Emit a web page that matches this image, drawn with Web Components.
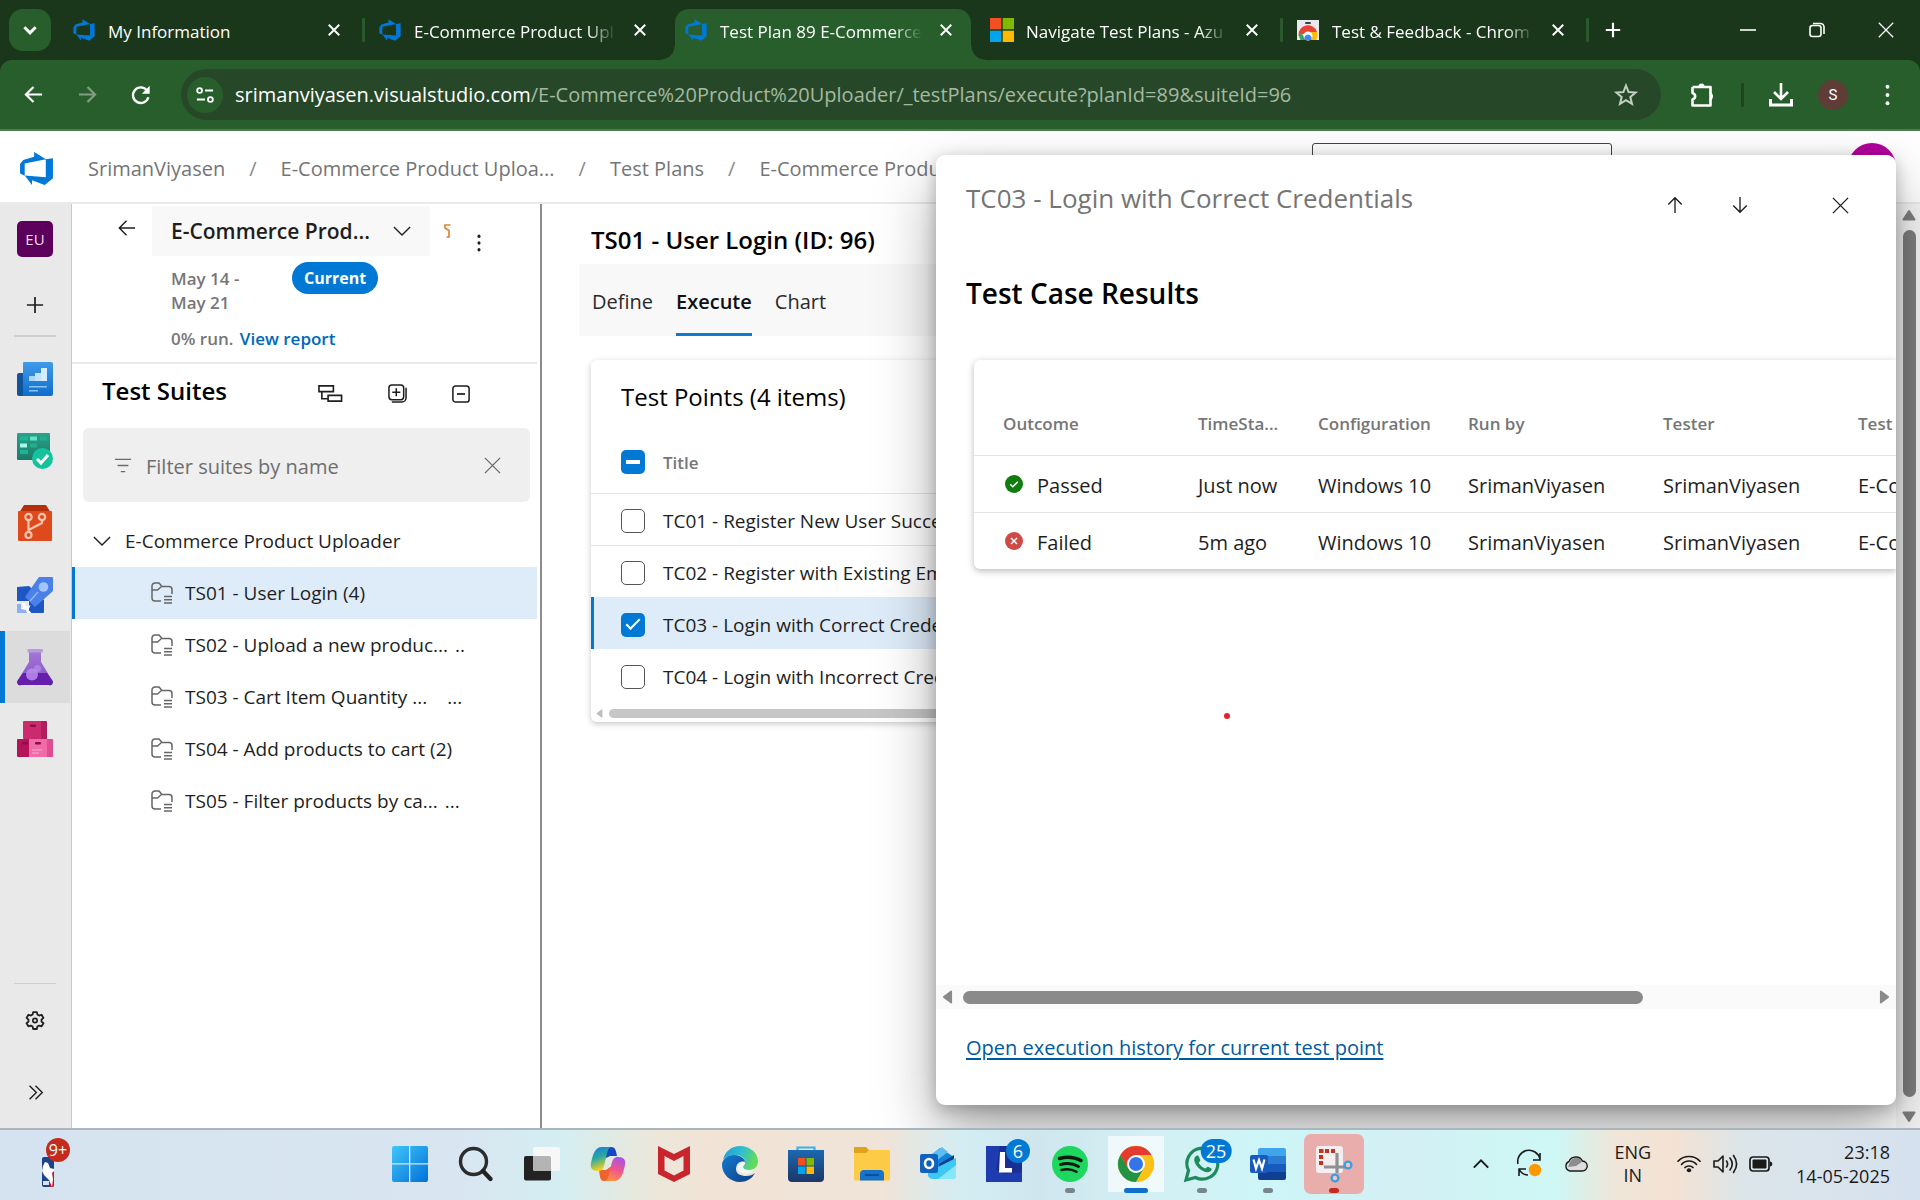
<!DOCTYPE html>
<html lang="en">
<head>
<meta charset="utf-8">
<title>Test Plan 89 E-Commerce</title>
<style>
  html, body { margin: 0; height: 100%; }
  body { font-family: "Open Sans", "Noto Sans", sans-serif; font-size: 19px; color: #1e1e1e; overflow: hidden; }
</style>
</head>
<body>
<desktop-shell></desktop-shell>
<script>
const BASE = `
  *, *::before, *::after { box-sizing: border-box; }
  button { font: inherit; color: inherit; background: none; border: 0; padding: 0; margin: 0; cursor: pointer; }
  a { color: inherit; text-decoration: none; }
  h1, h2, h3, p, ul, ol { margin: 0; padding: 0; font: inherit; list-style: none; }
  .center { display: flex; align-items: center; justify-content: center; }
`;
function define(name, css, html) {
  customElements.define(name, class extends HTMLElement {
    constructor() {
      super();
      this.attachShadow({ mode: 'open' });
      const t = document.createElement('template');
      const markup = typeof html === 'function' ? html(this) : html;
      t.innerHTML = `<style>${BASE}${css}</style>${markup}`;
      this.shadowRoot.append(t.content.cloneNode(true));
    }
  });
}

const stroke = (w, d, c = 'currentColor') => `<path d="${d}" fill="none" stroke="${c}" stroke-width="${w}"/>`;
const ICONS = {
  devops: ['0 0 18 18', `<path fill="#0078d7" d="M17 4v9.74l-4 3.28-6.2-2.26V17l-3.51-4.59 10.23.8V4.44zm-3.41.49L7.85 1v2.29L2.58 4.84 1 6.87v4.61l2.26 1V6.57z"/>`],
  microsoft: ['0 0 24 24', `<path fill="#f25022" d="M0 0h11.3v11.3H0z"/><path fill="#7fba00" d="M12.7 0H24v11.3H12.7z"/><path fill="#00a4ef" d="M0 12.7h11.3V24H0z"/><path fill="#ffb900" d="M12.7 12.7H24V24H12.7z"/>`],
  webstore: ['0 0 24 24', `<path fill="#e8eaed" d="M1 2h22v20H1z"/><rect x="9" y="4" width="6" height="2" rx="1" fill="#3c4043"/><path fill="#ea4335" d="M2.500 18a9.500 9.500 0 0 1 18.500-4h-9z"/><path fill="#34a853" d="M3 14.500a9.500 9.500 0 0 0 1.500 7.500H12l-4-4z"/><path fill="#fbbc04" d="M12 14h9a9 9 0 0 1-1 8h-9z"/><circle cx="12" cy="18" r="4.500" fill="#fff"/><path fill="#4285f4" d="M9 22a3.500 3.500 0 1 1 6 0z"/>`],
  x: ['0 0 16 16', stroke(2.2, 'M2 2l12 12M14 2L2 14')],
  xthin: ['0 0 20 20', stroke(1.4, 'M2 2l16 16M18 2L2 18')],
  plus: ['0 0 20 20', stroke(2.4, 'M10 2v16M2 10h16')],
  plusthin: ['0 0 20 20', stroke(1.9, 'M10 1v18M1 10h18')],
  chevBold: ['0 0 16 16', stroke(2.6, 'M3 5.500l5 5 5-5')],
  chev: ['0 0 20 20', stroke(1.5, 'M1 5.500l9 9 9-9')],
  up: ['0 0 20 20', stroke(2.2, 'M2 14l8-8 8 8')],
  minimise: ['0 0 16 16', stroke(1.6, 'M0 8h16')],
  restore: ['0 0 16 16', `<rect x="1" y="3.500" width="11" height="11" rx="2.500" fill="none" stroke="currentColor" stroke-width="1.600"/>${stroke(1.6, 'M4 1.500h7.500a3.500 3.500 0 0 1 3.500 3.500V12')}`],
  back: ['0 0 20 20', stroke(2.3, 'M19 10H3M10 2l-8 8 8 8')],
  backthin: ['0 0 20 20', stroke(1.6, 'M19 10H2M9.500 2L1.500 10l8 8')],
  forward: ['0 0 20 20', stroke(2.3, 'M1 10h16M10 2l8 8-8 8')],
  reload: ['0 0 24 24', stroke(2.6, 'M20 14.500A8.500 8.500 0 1 1 18.500 7') + `<path fill="currentColor" d="M21.500 2v8.500H13z"/>`],
  tune: ['0 0 20 20', `<circle cx="4" cy="5" r="2.700" fill="none" stroke="currentColor" stroke-width="2"/><circle cx="16" cy="15" r="2.700" fill="none" stroke="currentColor" stroke-width="2"/>${stroke(2, 'M10 5h9M1 15h9')}`],
  star: ['0 0 24 24', stroke(2, 'M12 2.500l2.600 6.500 7 .5-5.300 4.500 1.700 6.800-6-3.700-6 3.700 1.700-6.800L2.400 9.500l7-.5z')],
  puzzle: ['0 0 26 26', `<path fill="none" stroke="currentColor" stroke-width="2.600" stroke-linejoin="round" d="M2.500 5h18v6.500M20.500 17v6.500h-18v-6c3.500-1 3.500-5.500 0-6.500V5"/><path fill="currentColor" d="M8.500 4.500a3 3 0 0 1 6 0zM20.500 10.500a4 4 0 0 1 0 7.500z"/><path d="M20.500 10v8" stroke="currentColor" stroke-width="2.600"/>`],
  download: ['0 0 24 24', stroke(2.6, 'M12 0v14M5 9l7 7 7-7') + stroke(3, 'M1.500 16v6h21v-6')],
  dots: ['0 0 6 24', `<g fill="currentColor"><circle cx="3" cy="3" r="2.300"/><circle cx="3" cy="12" r="2.300"/><circle cx="3" cy="21" r="2.300"/></g>`],
  fav: ['0 0 7 14', stroke(1.7, 'M6.500 1H1v3l4 2.500V13H2.500')],
  overview: ['0 0 36 36', `<defs><linearGradient id="g" x2="0" y2="1"><stop stop-color="#3f9bea"/><stop offset="1" stop-color="#0f6ecb"/></linearGradient></defs><path fill="#12549c" d="M0 14a2 2 0 0 1 2-2h6v23H2a2 2 0 0 1-2-2z"/><path fill="url(#g)" d="M6 2a1 1 0 0 1 1-1h27a2 2 0 0 1 2 2v30a2 2 0 0 1-2 2H6z"/><path fill="#a9d6fb" d="M12 15h6v5h-6z"/><path fill="#c3e3fd" d="M18 12h6v8h-6z"/><path fill="#d7edff" d="M24 7h6v13h-6z"/><path fill="#8cc4f5" d="M12 25h18v1.600H12zM12 29h9v1.500h-9z"/>`],
  boards: ['0 0 36 36', `<defs><linearGradient id="g" x2="0" y2="1"><stop stop-color="#2aa38b"/><stop offset="1" stop-color="#197a68"/></linearGradient></defs><rect width="33" height="27" rx="1" fill="url(#g)"/><path fill="#1fb494" d="M3 3.500h8v4H3zM3 17h8v4H3z"/><path fill="#5ee6c4" d="M13 3.500h7v4h-7z"/><path fill="#25ab8e" d="M23 3.500h7v4h-7zM13 10.500h7v4h-7z"/><path fill="#a5fbe4" d="M3 10.500h7v4H3z"/><circle cx="25.500" cy="25.500" r="10.500" fill="#13c39c"/>${stroke(3, 'M20 26l4 4 7-8', '#fff')}`],
  repos: ['0 0 36 36', `<path fill="#b52f0b" d="M7 0h22l5 8H2z"/><rect x="1" y="6" width="34" height="30" rx="1" fill="#df4a1d"/><g fill="none" stroke="#fbc4ae" stroke-width="2.200"><circle cx="11.500" cy="12" r="3.200"/><circle cx="25" cy="12" r="3.200"/><circle cx="11.500" cy="30" r="3"/><path d="M11.500 15.500V27M25 15.500v2.500l-13.500 7"/></g>`],
  pipelines: ['0 0 36 36', `<path fill="#1e56c4" d="M0 10l12-1L27 23v12a1 1 0 0 1-1 1H12V24H0z"/><path fill="#4a80e8" d="M22 0h13a1 1 0 0 1 1 1v13L18 30 8 20z"/>${stroke(1.600, 'M13 24l8-9', '#8db4f8')}<circle cx="26.500" cy="10" r="4.800" fill="#a4c5fb"/><path fill="#8fb0ef" d="M0 27h4v5h6v4H0z"/><path fill="#fff" d="M4 26h4l1.500 4 4-2-2 5 3 3H10l-1-3-5-1 2-2z"/>`],
  plans: ['0 0 36 36', `<defs><linearGradient id="g" x2="0" y2="1"><stop stop-color="#a577d6"/><stop offset="1" stop-color="#8151c4"/></linearGradient></defs><path fill="url(#g)" d="M12 2h12v11l11 18a3 3 0 0 1-3 5H4a3 3 0 0 1-3-5l11-18z"/><path fill="#6420ab" d="M6 24h24l5 7a3 3 0 0 1-3 5H4a3 3 0 0 1-3-5z"/><rect x="10.500" width="15.500" height="3.500" rx="1" fill="#b79be0"/><circle cx="15" cy="25.500" r="6" fill="#b98df0" opacity=".85"/><circle cx="20.500" cy="19.500" r="3.600" fill="#b98df0" opacity=".7"/>`],
  artifacts: ['0 0 36 36', `<rect x="6" width="24" height="18" rx="1" fill="#cc2a6e"/><path fill="#b01f5d" d="M24 0h5a1 1 0 0 1 1 1v17h-6z"/><path fill="#b5135a" d="M0 19a1 1 0 0 1 1-1h11v18H1a1 1 0 0 1-1-1z"/><path fill="#f16ba8" d="M12 18h23a1 1 0 0 1 1 1v16a1 1 0 0 1-1 1H12z"/><path fill="#e04c90" d="M30 18h5a1 1 0 0 1 1 1v16a1 1 0 0 1-1 1h-5z"/><g fill="#8a0f45"><rect x="13" y="3.500" width="6" height="2.500" rx="1"/><rect x="5" y="21" width="6" height="2.500" rx="1"/><rect x="18" y="21" width="6" height="2.500" rx="1"/></g>${stroke(1, 'M15 29h10M15 32h7', '#f9a9ce')}`],
  gear: ['0 0 24 24', `<path fill="none" stroke="currentColor" stroke-width="2.200" stroke-linejoin="round" d="M9.800 2.500h4.400l.7 3 2 1.200 3-1 2.200 3.800-2.300 2v2.300l2.300 2-2.200 3.800-3-.9-2 1.200-.7 2.900H9.800l-.7-2.900-2-1.200-3 .9-2.200-3.800 2.300-2v-2.300l-2.300-2 2.200-3.800 3 1 2-1.200z"/><circle cx="12" cy="12.600" r="2.600" fill="none" stroke="currentColor" stroke-width="2"/>`],
  dblchev: ['0 0 20 20', stroke(1.6, 'M3 2l8 8-8 8M10 2l8 8-8 8')],
  tree: ['0 0 26 20', stroke(1.7, 'M1 2h15v6H1zM10.500 12h14v6h-14zM4 8v7.500h6.500')],
  expandAll: ['0 0 20 20', `<rect x="1" y="1" width="15.500" height="15.500" rx="3" fill="none" stroke="currentColor" stroke-width="1.600"/>${stroke(1.6, 'M8.700 4.500v8.500M4.500 8.700h8.500M4 19h10.500a4.500 4.500 0 0 0 4.500-4.500V4')}`],
  collapse: ['0 0 20 20', `<rect x="1" y="1" width="18" height="18" rx="3" fill="none" stroke="currentColor" stroke-width="1.700"/>${stroke(1.9, 'M5.500 10h9')}`],
  filter: ['0 0 20 16', stroke(1.4, 'M1 1.500h18M4 8h12M7.500 14.500h5')],
  folder: ['0 0 22 22', `<g fill="none" stroke="#666" stroke-width="1.500"><path d="M10 19H4a3 3 0 0 1-3-3V4a3 3 0 0 1 3-3h4l3 3.500h7A3 3 0 0 1 21 7.500V12"/><path d="M1 8h5.500L10.500 4.500M13 14.500h8M13 17.800h8M13 21h8"/></g>`],
  arrowUp: ['0 0 20 20', stroke(1.5, 'M10 19V2M2.500 9.500L10 2l7.500 7.500')],
  arrowDown: ['0 0 20 20', stroke(1.5, 'M10 1v17M2.500 10.500L10 18l7.500-7.500')],
  passed: ['0 0 18 18', `<circle cx="9" cy="9" r="9" fill="#107c10"/>${stroke(1.500, 'M5.200 9.200l2.600 2.600 5-5', '#fff')}`],
  failed: ['0 0 18 18', `<circle cx="9" cy="9" r="9" fill="#cd4a45"/>${stroke(1.500, 'M6 6l6 6M12 6l-6 6', '#fff')}`],
  nba: ['0 0 12 30', `<rect width="12" height="30" rx="2" fill="#1d428a"/><path fill="#c8102e" d="M8 14h4v14a2 2 0 0 1-2 2H8z"/><path fill="#fff" d="M3 5l3 1 2 5 4 1v2l-2 2 1 6-1 8L7 23 2 18l-2-4 1-5z"/><path fill="#dbe3f2" d="M1 24h6v4H1z"/>`],
  windows: ['0 0 36 36', `<defs><linearGradient id="g" x2="1" y2="1"><stop stop-color="#3fc6fa"/><stop offset="1" stop-color="#0270d8"/></linearGradient></defs><path fill="url(#g)" d="M2 0h15v17.300H0V2a2 2 0 0 1 2-2zM18.300 0H34a2 2 0 0 1 2 2v15.300H18.300zM0 18.600h17V36H2a2 2 0 0 1-2-2zM18.300 18.600H36V34a2 2 0 0 1-2 2H18.300z"/>`],
  search: ['0 0 36 36', `<circle cx="15.500" cy="15.500" r="13" fill="none" stroke="#2a2c2e" stroke-width="3.400"/><path d="M25 25l7.500 8" stroke="#222" stroke-width="4.400" stroke-linecap="round"/>`],
  taskview: ['0 0 36 36', `<rect y="10" width="27" height="24.500" rx="2" fill="#232323"/><rect x="9" y="1" width="27" height="24" rx="2" fill="#f7f7f7"/><path fill="#b4b4b4" d="M9 10h16a2 2 0 0 1 2 2v13H11a2 2 0 0 1-2-2z"/>`],
  copilot: ['0 0 36 36', `<defs><linearGradient id="a" x2=".3" y2="1"><stop stop-color="#1d75e2"/><stop offset=".5" stop-color="#29a9a0"/><stop offset="1" stop-color="#f8cf1c"/></linearGradient><linearGradient id="b" x1=".6" x2=".3" y2="1"><stop stop-color="#a755e8"/><stop offset=".5" stop-color="#f0548e"/><stop offset="1" stop-color="#fb9346"/></linearGradient></defs><path fill="#1647c4" d="M14 1h7c4 0 5 3 6 9h-7l-8 4z"/><path fill="#f0622e" d="M9 24h7l7-5-4 13c-1 2.500-2 3-5 3-3.500 0-4-3-5-11z"/><path fill="url(#a)" d="M12 1h9c-3 1-3.500 4-6 15-1.500 7-3 9-7 9-6 0-8-3-7-8C3 8 5 1 12 1z"/><path fill="url(#b)" d="M24 35h-9c3-1 3.500-4 6-15 1.500-7 3-9 7-9 6 0 8 3 7 8-2 9-4 16-11 16z"/>`],
  mcafee: ['0 0 36 36', `<path fill="#c8252c" d="M2 0l16 8 16-8v28l-16 8-16-8z"/><path fill="#efe4da" d="M8.500 10l9.500 5 9.500-5v14.500L18 29.500l-9.500-5z"/>`],
  edge: ['0 0 36 36', `<defs><linearGradient id="a" x2="1" y2=".3"><stop stop-color="#1a9be0"/><stop offset=".6" stop-color="#35c1c8"/><stop offset="1" stop-color="#5fdc5a"/></linearGradient><linearGradient id="b" x2="1" y2="1"><stop stop-color="#1579cf"/><stop offset="1" stop-color="#0c3f85"/></linearGradient></defs><path fill="url(#a)" d="M1 14C3 5 10 0 18 0c10 0 18 7 18 15 0 6-4 9-9 9-4 0-6-1-6-3 0-1 2-2 2-5 0-4-4-7-10-7C7 9 2 12 1 14z"/><path fill="url(#b)" d="M0 19C0 13 6 9 12 9c7 0 11 4 11 7-4-2-9 1-9 7 0 5 5 7 10 7 4 0 7-1 9-3-3 6-9 9-15 9C8 36 0 28 0 19z"/><path fill="#eef6f8" d="M23 16c0 3-2 4-2 5 0 2 2 3 6 3 2 0 4-.5 5-1-1 3-5 5-9 5-5 0-8-4-7-8s5-5 7-4z"/>`],
  store: ['0 0 36 36', `<defs><linearGradient id="g" x2="0" y2="1"><stop stop-color="#1c68b0"/><stop offset="1" stop-color="#1b3766"/></linearGradient></defs>${stroke(2.2, 'M9.500 6V1.500h17V6', '#37b0ec')}<path fill="url(#g)" d="M0 4h36v28a4 4 0 0 1-4 4H4a4 4 0 0 1-4-4z"/><path fill="#f25022" d="M10 12h7.500v7.500H10z"/><path fill="#7fba00" d="M18.500 12H26v7.500h-7.500z"/><path fill="#00a4ef" d="M10 20.500h7.500V28H10z"/><path fill="#ffb900" d="M18.500 20.500H26V28h-7.500z"/>`],
  explorer: ['0 0 36 36', `<path fill="#e0a31a" d="M0 1h12l3 3-3 4H0z"/><path fill="#fdcb45" d="M0 7h12l3-3h21v29a1.500 1.500 0 0 1-1.500 1.500h-33A1.500 1.500 0 0 1 0 33z"/><path fill="#1573cf" d="M6 28a4 4 0 0 1 4-4h16a4 4 0 0 1 4 4v6.500H6z"/>${stroke(1.800, 'M11 29h14', '#0b4b96')}`],
  outlook: ['0 0 36 36', `<path fill="#1484d8" d="M7 12L20 2l14 9v7L20 28 7 24z"/><path fill="#5bc0f0" d="M12 8L22 1l6 5-16 12z"/><path fill="#0f3f91" d="M19 18l15-9v6L20 26z"/><path fill="#3cc8f0" d="M8 26l28-14v17a4 4 0 0 1-4 4H12a5 5 0 0 1-4-3z"/><path fill="#86e7f8" d="M18 33l18-14v10a4 4 0 0 1-4 4z"/><rect y="8" width="18" height="19" rx="2" fill="#0f63be"/><ellipse cx="9" cy="17.500" rx="4" ry="4.500" fill="none" stroke="#fff" stroke-width="2.600"/>`],
  lapp: ['0 0 36 36', `<path fill="#1f3bb0" d="M0 0h36v36H0z"/><path fill="#142a80" d="M14 0L10 24l8 4 18-2V0z" opacity=".6"/><path fill="#fff" d="M14 6h5v16h7v4.500H13z"/>`],
  spotify: ['0 0 36 36', `<circle cx="18" cy="18" r="18" fill="#1ed760"/><g fill="none" stroke="#0c1a10" stroke-linecap="round"><path stroke-width="3.600" d="M7.500 12.500c7-2 15.500-1.300 21.500 2"/><path stroke-width="3" d="M8.500 18.500c6-1.700 13-1 18 2"/><path stroke-width="2.400" d="M9.500 24c5-1.300 10.500-.8 15 1.800"/></g>`],
  chrome: ['0 0 36 36', `<circle cx="18" cy="18" r="18" fill="#fbc116"/><path fill="#e33b2e" d="M2.400 9A18 18 0 0 1 33.600 9H18l-8 13.500z"/><path fill="#229342" d="M2.400 9A18 18 0 0 0 18 36l7.800-13.500H10.200z"/><path fill="#fbc116" d="M33.600 9A18 18 0 0 1 18 36l7.800-13.500V9z"/><circle cx="18" cy="18" r="9" fill="#fff"/><circle cx="18" cy="18" r="7" fill="#3573e8"/>`],
  whatsapp: ['0 0 36 36', `<path fill="none" stroke="#1f8a5c" stroke-width="3.200" d="M2 34l2.500-9.500A15.500 15.500 0 1 1 11.500 31.500z"/><path fill="#1f8a5c" d="M11.500 10.500c1.500-1.500 3-1 3.500.5l1.300 3c.3 1-1.800 2.500-1.500 3 1.500 2.500 3.500 4.500 6.200 5.500.8.300 2-2.200 3-1.800l3 1.500c1 .5.7 2-.5 3-2 1.700-4.500 1.300-7 .1-4.500-2.100-7-5-8.700-8.800-1-2.300-.8-4.600.7-6z"/>`],
  word: ['0 0 36 36', `<path fill="#41a5ee" d="M8 4a2 2 0 0 1 2-2h24a2 2 0 0 1 2 2v6H8z"/><path fill="#2b7cd3" d="M8 10h28v8H8z"/><path fill="#185abd" d="M8 18h28v8H8z"/><path fill="#103f91" d="M8 26h28v6a2 2 0 0 1-2 2H10a2 2 0 0 1-2-2z"/><rect y="9" width="18" height="18" rx="2" fill="#185abd"/>${stroke(2.200, 'M3.500 13.500l2.500 9 3-8.500 3 8.500 2.500-9', '#fff')}`],
  snip: ['0 0 36 36', `<rect width="27" height="27" rx="3" fill="#f4efee"/><g fill="#c8311d"><path d="M3 3h4.500v4H3zM9 3h4v4H9zM15 3h4v4h-4zM3 9h4v4H3zM3 15h4v4H3z"/></g><g fill="none" stroke="#8d9095" stroke-width="3.200"><path d="M21 7v20M8 21h21"/></g><g fill="#f1c8c5" stroke="#3d9fe0" stroke-width="2.400"><circle cx="32" cy="19" r="3.400"/><circle cx="19" cy="32" r="3.400"/></g>`],
  sync: ['0 0 24 24', stroke(1.6, 'M1 12A11 11 0 0 1 23 7M23 1v7h-7M2 24v-7h7M2 17c2 4 5 6 9 6') + `<circle cx="18" cy="18" r="6.200" fill="#ff9800"/>`],
  cloud: ['0 0 24 16', `<path d="M6 15a5 5 0 0 1-1-9.500A7.500 7.500 0 0 1 18.500 5 5 5 0 0 1 18 15z" fill="#dedede" stroke="#1b1b1b" stroke-width="1.400"/><path fill="#8d8d8d" d="M6 6c3-5 9-6 12 0l-6 4-8 1z"/>`],
  wifi: ['0 0 24 20', `<g fill="none" stroke="currentColor" stroke-width="1.700" stroke-linecap="round"><path d="M1 7c6-7 16-7 22 0M4.500 10.500c4-5 11-5 15 0M8 14c2-2.500 6-2.500 8 0"/></g><circle cx="12" cy="17" r="2.200" fill="currentColor"/>`],
  volume: ['0 0 24 20', `<g fill="none" stroke="currentColor" stroke-width="1.600" stroke-linejoin="round" stroke-linecap="round"><path d="M1 7h4l5-5v16l-5-5H1zM13.500 7c1.500 2 1.500 4 0 6M17 4c3 4 3 8 0 12M20.500 1.500c4 5.500 4 11.500 0 17"/></g>`],
  battery: ['0 0 24 16', `<rect x="1" y="1" width="19" height="14" rx="3" fill="none" stroke="currentColor" stroke-width="1.700"/><rect x="3.500" y="3.500" width="14" height="9" rx="1" fill="currentColor"/><path fill="currentColor" d="M21 5.500c3 0 3 5 0 5z"/>`],
  triUp: ['0 0 14 12', `<path fill="#7f7f7f" stroke="#7f7f7f" stroke-width="2" stroke-linejoin="round" d="M7 2l5.500 8.500h-11z"/>`],
  triDown: ['0 0 14 12', `<path fill="#7f7f7f" stroke="#7f7f7f" stroke-width="2" stroke-linejoin="round" d="M7 10L1.500 1.500h11z"/>`],
  triLeft: ['0 0 12 14', `<path fill="currentColor" stroke="currentColor" stroke-width="2" stroke-linejoin="round" d="M2 7l8-5.500v11z"/>`],
  triRight: ['0 0 12 14', `<path fill="currentColor" stroke="currentColor" stroke-width="2" stroke-linejoin="round" d="M10 7L2 1.500v11z"/>`]
};
customElements.define('ui-icon', class extends HTMLElement {
  connectedCallback() {
    if (this.shadowRoot) return;
    const [box, body] = ICONS[this.getAttribute('name')];
    const w = this.getAttribute('w'), h = this.getAttribute('h') || w;
    this.attachShadow({ mode: 'open' }).innerHTML =
      `<style>:host{display:block;flex:none;width:${w}px;height:${h}px}svg{display:block;width:100%;height:100%;overflow:visible}</style>
       <svg viewBox="${box}" preserveAspectRatio="none" aria-hidden="true">${body}</svg>`;
  }
});

/* ---------- browser chrome ---------- */
define('browser-tab', `
  :host { display: block; flex: 0 1 306px; min-width: 0; }
  .tab { height: 51px; display: flex; align-items: center; gap: 12px; position: relative; margin-top: 9px; padding: 0 22px 9px 14px; color: #fff; font-size: 17px; line-height: 24px; }
  .tab::after { content: ""; position: absolute; right: -1px; top: 9px; width: 3px; height: 24px; border-radius: 1px; background: #29592c; }
  :host([quiet]) .tab::after { display: none; }
  :host([active]) .tab { background: #285e2c; border-radius: 14px 14px 0 0; margin-left: 5px; margin-right: 5px; padding: 0 17px 9px 9px; }
  :host([active]) .tab::after { display: none; }
  .foot { display: none; }
  :host([active]) .foot { display: block; position: absolute; bottom: 0; width: 14px; height: 14px; }
  .l { left: -14px; background: radial-gradient(circle at 0 0, transparent 13px, #285e2c 14px); }
  .r { right: -14px; background: radial-gradient(circle at 100% 0, transparent 13px, #285e2c 14px); }
  .title { flex: 1; min-width: 0; overflow: hidden; white-space: nowrap; padding-top: 3px; }
  :host([fade]) .title { -webkit-mask-image: linear-gradient(90deg, #000 86%, transparent); mask-image: linear-gradient(90deg, #000 86%, transparent); }
  button { width: 24px; height: 24px; margin-right: -4px; }
`, el => `<div class="tab"><i class="foot l"></i><i class="foot r"></i><ui-icon name="${el.getAttribute('icon')}" w="24"></ui-icon><span class="title"><slot></slot></span><button class="center" aria-label="Close tab"><ui-icon name="x" w="14"></ui-icon></button></div>`);

define('browser-chrome', `
  :host { display: block; background: #1a371b; }
  .strip { display: flex; height: 60px; padding-left: 9px; color: #fff; }
  .drop { width: 42px; height: 42px; margin: 9px 7px 0 0; border-radius: 14px; background: #285e2c; }
  .strip > button:not(.drop) { height: 60px; }
  .new { width: 50px; }
  .win { margin-left: auto; display: flex; }
  .win button { width: 69px; height: 60px; }
  .bar { display: flex; align-items: center; height: 71px; background: #285e2c; border-radius: 12px 12px 0 0; border-bottom: 2px solid #4e7a50; padding: 0 6px; color: #fff; }
  .nav { width: 54px; height: 54px; }
  .off { color: #7f9f80; }
  .omni { flex: 1; display: flex; align-items: center; height: 51px; margin-left: 13px; padding: 0 23px 0 6px; border-radius: 26px; background: #274828; min-width: 0; }
  .chip { width: 36px; height: 36px; border-radius: 50%; background: #285e2c; margin-right: 12px; }
  .url { flex: 1; font-size: 20px; line-height: 28px; color: #a4b8a2; white-space: nowrap; overflow: hidden; }
  .url b { font-weight: 400; color: #fff; }
  .star { color: #c3cfc1; }
  .tools { display: flex; align-items: center; gap: 25px; padding: 0 24px 0 29px; }
  .rule { width: 3px; height: 24px; background: #1c4520; border-radius: 1px; }
  .me { width: 30px; height: 30px; border-radius: 50%; background: #5f3d37; font: 15px Roboto, sans-serif; margin-right: 12px; }
`, `
  <div class="strip">
    <button class="drop center" aria-label="Search tabs"><ui-icon name="chevBold" w="18"></ui-icon></button>
    <browser-tab icon="devops">My Information</browser-tab>
    <browser-tab icon="devops" fade quiet>E-Commerce Product Upl</browser-tab>
    <browser-tab icon="devops" fade active>Test Plan 89 E-Commerce</browser-tab>
    <browser-tab icon="microsoft" fade>Navigate Test Plans - Azu</browser-tab>
    <browser-tab icon="webstore" fade>Test &amp; Feedback - Chrom</browser-tab>
    <button class="new center" aria-label="New tab"><ui-icon name="plus" w="18"></ui-icon></button>
    <div class="win">
      <button class="center" aria-label="Minimise"><ui-icon name="minimise" w="16"></ui-icon></button>
      <button class="center" aria-label="Restore"><ui-icon name="restore" w="16"></ui-icon></button>
      <button class="center" aria-label="Close"><ui-icon name="xthin" w="18"></ui-icon></button>
    </div>
  </div>
  <div class="bar">
    <button class="nav center" aria-label="Back"><ui-icon name="back" w="19"></ui-icon></button>
    <button class="nav center off" aria-label="Forward"><ui-icon name="forward" w="19"></ui-icon></button>
    <button class="nav center" aria-label="Reload"><ui-icon name="reload" w="22"></ui-icon></button>
    <div class="omni">
      <button class="chip center" aria-label="Site information"><ui-icon name="tune" w="18"></ui-icon></button>
      <span class="url"><b>srimanviyasen.visualstudio.com</b>/E-Commerce%20Product%20Uploader/_testPlans/execute?planId=89&amp;suiteId=96</span>
      <button class="star" aria-label="Bookmark"><ui-icon name="star" w="24"></ui-icon></button>
    </div>
    <div class="tools">
      <button aria-label="Extensions"><ui-icon name="puzzle" w="26"></ui-icon></button>
      <i class="rule"></i>
      <button aria-label="Downloads"><ui-icon name="download" w="24"></ui-icon></button>
      <button class="me center">S</button>
      <button aria-label="Menu"><ui-icon name="dots" w="5" h="22"></ui-icon></button>
    </div>
  </div>`);

/* ---------- Azure DevOps ---------- */
define('az-header', `
  :host { display: flex; align-items: center; height: 73px; background: #fff; border-bottom: 2px solid #eaeaea; padding: 4px 24px 0 18px; color: #757575; font-size: 20px; line-height: 28px; }
  nav ol { display: flex; margin-left: 33px; white-space: nowrap; }
  li + li::before { content: "/"; padding: 0 24px; color: #8a8a8a; }
  .find { width: 300px; height: 48px; margin: 8px 236px 0 auto; border: 1px solid #444; border-radius: 3px; background: #fff; padding: 0; align-self: flex-start; }
  .me { width: 48px; height: 48px; border-radius: 50%; background: #b4009e; align-self: flex-start; margin-top: 8px; flex: none; }
`, `
  <a href="#" aria-label="Azure DevOps"><ui-icon name="devops" w="37"></ui-icon></a>
  <nav><ol><li><a href="#">SrimanViyasen</a></li><li><a href="#">E-Commerce Product Uploa...</a></li><li><a href="#">Test Plans</a></li><li><a href="#">E-Commerce Produ</a></li></ol></nav>
  <input class="find" type="search" aria-label="Search">
  <button class="me" aria-label="Account"></button>`);

define('az-rail', `
  :host { display: flex; flex-direction: column; align-items: center; width: 72px; flex: none; background: #e9e9e9; border-right: 1px solid #c8c8c8; padding: 17px 1px 0 0; }
  .eu { width: 36px; height: 36px; border-radius: 5px; background: #5c005c; color: #f1dff1; font-size: 15px; }
  .add { width: 36px; height: 36px; margin: 30px 0 12px; }
  hr { width: 42px; border: 0; height: 2px; background: #cfcfcf; margin: 0 0 6px; }
  .hub { width: 100%; height: 72px; }
  .on { background: #dcdcdc; box-shadow: inset 5px 0 #0078d4; }
  .gap { flex: 1; }
  .thin { height: 1px; margin: 0; }
`, `
  <a class="eu center" href="#">EU</a>
  <button class="add center" aria-label="Add"><ui-icon name="plusthin" w="18"></ui-icon></button>
  <hr>
  ${['overview', 'boards', 'repos', 'pipelines', 'plans', 'artifacts'].map(n => `<a class="hub center${n === 'plans' ? ' on' : ''}" href="#" aria-label="${n}"><ui-icon name="${n}" w="36"></ui-icon></a>`).join('')}
  <div class="gap"></div>
  <hr class="thin">
  <button class="hub center" aria-label="Settings"><ui-icon name="gear" w="20"></ui-icon></button>
  <button class="hub center" aria-label="Expand"><ui-icon name="dblchev" w="17"></ui-icon></button>`);

define('suite-item', `
  :host { display: block; }
  button { display: flex; align-items: center; width: 100%; height: 52px; padding-left: 79px; font-size: 19px; line-height: 28px; text-align: left; white-space: nowrap; }
  :host([selected]) button { background: #deecf9; box-shadow: inset 3px 0 #0078d4; }
  ui-icon { margin-right: 12px; }
  .more { margin-left: var(--gap, 7px); }
`, `<button><ui-icon name="folder" w="22"></ui-icon><slot></slot><span class="more"><slot name="more"></slot></span></button>`);

define('suites-panel', `
  :host { display: block; width: 465px; flex: none; background: #fff; }
  .plan { display: flex; padding: 2px 0 11px 31px; border-bottom: 2px solid #eaeaea; }
  .back { width: 48px; height: 44px; }
  .col { width: 278px; margin-left: 1px; }
  .pick { display: flex; width: 100%; height: 50px; align-items: center; justify-content: space-between; padding: 0 19px; background: #f8f8f8; font-weight: 600; font-size: 21px; white-space: nowrap; }
  .meta { display: flex; padding: 6px 19px 0; font-size: 17px; line-height: 24px; color: #767676; font-weight: 600; }
  .date { width: 121px; padding: 5px 40px 0 0; white-space: nowrap; }
  .pill { height: 32px; padding: 4px 12px; border-radius: 16px; background: #0078d4; color: #fff; font-weight: 700; font-size: 16px; }
  .run { padding: 12px 19px 0; font-size: 17px; line-height: 24px; color: #767676; font-weight: 600; }
  .run a { color: #0068b8; margin-left: 2px; }
  .fav { height: 16px; margin: 17px 26px 0 14px; color: #d8873a; }
  .menu { margin-top: 28px; height: 18px; }
  .head { display: flex; align-items: center; height: 64px; padding: 0 67px 12px 30px; }
  h2 { flex: 1; font-size: 24px; font-weight: 600; color: #000; }
  .acts { display: flex; gap: 45px; align-items: center; padding-top: 7px; }
  .filter { display: flex; align-items: center; height: 74px; margin: 0 7px 0 11px; padding: 0 28px 0 31px; border-radius: 6px; background: #efefef; color: #6b6b6b; }
  .filter input { flex: 1; min-width: 0; margin-left: 14px; padding: 2px 0 0; border: 0; background: none; font: inherit; font-size: 20px; line-height: 28px; height: 34px; outline: 0; }
  .filter input::placeholder { color: #6e6e6e; opacity: 1; }
  .root { display: flex; align-items: center; gap: 14px; width: 100%; height: 52px; margin-top: 13px; padding-left: 21px; font-size: 19px; }
`, `
  <div class="plan">
    <button class="back center" aria-label="Back"><ui-icon name="backthin" w="18"></ui-icon></button>
    <div class="col">
      <button class="pick">E-Commerce Prod...<ui-icon name="chev" w="18"></ui-icon></button>
      <div class="meta"><span class="date">May 14 -<br>May 21</span><span class="pill">Current</span></div>
      <p class="run">0% run. <a href="#">View report</a></p>
    </div>
    <button class="fav" aria-label="Favourite"><ui-icon name="fav" w="7" h="14"></ui-icon></button>
    <button class="menu" aria-label="More"><ui-icon name="dots" w="4" h="18"></ui-icon></button>
  </div>
  <div class="head"><h2>Test Suites</h2><div class="acts">
    <button aria-label="Tree view"><ui-icon name="tree" w="25" h="19"></ui-icon></button>
    <button aria-label="Expand all"><ui-icon name="expandAll" w="19"></ui-icon></button>
    <button aria-label="Collapse all"><ui-icon name="collapse" w="18"></ui-icon></button></div></div>
  <div class="filter"><ui-icon name="filter" w="18" h="15"></ui-icon><input type="text" placeholder="Filter suites by name" aria-label="Filter suites by name"><button aria-label="Clear filter"><ui-icon name="xthin" w="19"></ui-icon></button></div>
  <button class="root"><ui-icon name="chev" w="18"></ui-icon>E-Commerce Product Uploader</button>
  <suite-item selected>TS01 - User Login (4)</suite-item>
  <suite-item>TS02 - Upload a new produc...<span slot="more">..</span></suite-item>
  <suite-item style="--gap:20px">TS03 - Cart Item Quantity ...<span slot="more">...</span></suite-item>
  <suite-item>TS04 - Add products to cart (2)</suite-item>
  <suite-item>TS05 - Filter products by ca...<span slot="more">...</span></suite-item>`);

define('points-pane', `
  :host { display: block; flex: 1; min-width: 0; background: #fff; border-left: 2px solid #8c8c8c; margin-left: 3px; padding-left: 37px; overflow: hidden; }
  h1 { padding: 21px 0 0 12px; font-size: 24px; line-height: 30px; height: 60px; font-weight: 600; color: #000; }
  .tabs { display: flex; gap: 23px; height: 72px; padding-left: 13px; background: #f8f8f8; font-size: 20px; color: #2a2a2a; }
  .tabs button { height: 72px; border-bottom: 3px solid transparent; border-top: 5px solid transparent; }
  .tabs .on { font-weight: 600; color: #111; border-bottom-color: #0f78d0; }
  .card { margin: 24px 24px 0 12px; border-radius: 6px; background: #fff; box-shadow: 0 2px 6px rgba(0,0,0,.22); height: 362px; overflow: hidden; display: flex; flex-direction: column; }
  h2 { padding: 22px 0 0 30px; font-size: 24px; line-height: 30px; height: 72px; color: #000; }
  table { width: 100%; border-collapse: collapse; font-size: 19px; table-layout: fixed; }
  th { font-weight: 600; text-align: left; color: #767676; font-size: 17px; height: 61px; padding: 0; }
  th, td { border-bottom: 1px solid #e4e4e4; white-space: nowrap; }
  td { height: 52px; padding: 3px 0 0; }
  tr.s3 td, tr.s2 td, tr.s4 td { border-bottom-color: transparent; }
  tr.s3 { background: #deecf9; box-shadow: inset 3px 0 #0078d4; }
  .c { width: 72px; padding-left: 30px; }
  label { display: block; }
  input { appearance: none; display: block; width: 24px; height: 24px; margin: 0; border: 1px solid #555; border-radius: 5px; background: #fff; }
  input.mix { border: 0; background: linear-gradient(#fff, #fff) center / 14px 4px no-repeat #0078d4; }
  input:checked { border: 0; background: #0078d4; display: grid; place-items: center; }
  input:checked::before { content: ""; width: 14px; height: 7px; border: solid #fff; border-width: 0 0 2px 2px; rotate: -45deg; margin-bottom: 5px; }
  .scroll { display: flex; align-items: center; gap: 6px; height: 17px; padding-left: 5px; margin-top: auto; color: #bdbdbd; }
  .scroll i { height: 9px; flex: 1; border-radius: 5px; background: #c6c6c6; }
`, `
  <h1>TS01 - User Login (ID: 96)</h1>
  <div class="tabs"><button>Define</button><button class="on">Execute</button><button>Chart</button></div>
  <section class="card">
    <h2>Test Points (4 items)</h2>
    <table>
      <thead><tr><th class="c"><input class="mix" type="checkbox" aria-label="Select all"></th><th>Title</th></tr></thead>
      <tbody>
        ${['TC01 - Register New User Succe', 'TC02 - Register with Existing Em', 'TC03 - Login with Correct Crede', 'TC04 - Login with Incorrect Cred'].map((t, i) =>
          `<tr class="s${i + 1}"><td class="c"><input type="checkbox" id="p${i}"${i === 2 ? ' checked' : ''}></td><td><label for="p${i}">${t}</label></td></tr>`).join('')}
      </tbody>
    </table>
    <div class="scroll"><ui-icon name="triLeft" w="7" h="9"></ui-icon><i></i></div>
  </section>`);

define('results-dialog', `
  :host { display: flex; flex-direction: column; position: absolute; top: 24px; right: 24px; bottom: 23px; width: 50%; background: #fff; border-radius: 9px; overflow: hidden; box-shadow: 0 28px 60px rgba(0,0,0,.34), 0 4px 16px rgba(0,0,0,.24); }
  header { display: flex; align-items: flex-start; padding: 27px 46px 0 30px; }
  h1 { flex: 1; font-size: 26px; line-height: 32px; color: #757575; }
  header button { margin-top: 14px; }
  .down { margin-left: 47px; margin-right: 82px; }
  h2 { padding: 60px 0 0 30px; font-size: 28px; line-height: 36px; font-weight: 600; color: #000; }
  .card { margin: 49px 0 0 38px; border-radius: 6px 0 0 6px; box-shadow: 0 2px 7px rgba(0,0,0,.28); overflow: hidden; }
  table { border-collapse: collapse; table-layout: fixed; width: 1100px; font-size: 20px; }
  th { height: 95px; padding: 33px 0 0; font-size: 17px; font-weight: 600; color: #767676; text-align: left; border-bottom: 1px solid #e4e4e4; }
  td { height: 57px; padding: 3px 0 0; border-bottom: 1px solid #e4e4e4; }
  tr:last-child td { border-bottom: 0; }
  th, td { white-space: nowrap; }
  .o { display: flex; align-items: center; gap: 14px; }
  .o ui-icon { margin: 0 0 3px 2px; }
  .dot { width: 6px; height: 6px; border-radius: 50%; background: #e0242b; position: absolute; left: 30%; top: calc(59% - 3px); }
  .scroll { display: flex; align-items: center; height: 24px; margin-top: auto; padding: 0 6px; gap: 10px; background: #fafafa; color: #8a8a8a; }
  .track { flex: 1; }
  .track i { display: block; width: 75%; height: 13px; border-radius: 7px; background: #8a8a8a; }
  footer { padding: 23px 30px 41px; font-size: 20px; line-height: 32px; }
  footer a { color: #005a9e; text-decoration: underline; text-underline-offset: 3px; }
`, `
  <header><h1>TC03 - Login with Correct Credentials</h1>
    <button aria-label="Previous"><ui-icon name="arrowUp" w="18"></ui-icon></button>
    <button class="down" aria-label="Next"><ui-icon name="arrowDown" w="18"></ui-icon></button>
    <button aria-label="Close"><ui-icon name="xthin" w="19"></ui-icon></button></header>
  <h2>Test Case Results</h2>
  <div class="card"><table>
    <colgroup><col style="width:29px"><col style="width:195px"><col style="width:120px"><col style="width:150px"><col style="width:195px"><col style="width:195px"><col></colgroup>
    <thead><tr><th></th><th>Outcome</th><th>TimeSta...</th><th>Configuration</th><th>Run by</th><th>Tester</th><th>Test</th></tr></thead>
    <tbody>
      <tr><td></td><td><span class="o"><ui-icon name="passed" w="18"></ui-icon>Passed</span></td><td>Just now</td><td>Windows 10</td><td>SrimanViyasen</td><td>SrimanViyasen</td><td>E-Co</td></tr>
      <tr><td></td><td><span class="o"><ui-icon name="failed" w="18"></ui-icon>Failed</span></td><td>5m ago</td><td>Windows 10</td><td>SrimanViyasen</td><td>SrimanViyasen</td><td>E-Co</td></tr>
    </tbody></table></div>
  <i class="dot"></i>
  <div class="scroll"><ui-icon name="triLeft" w="11" h="14"></ui-icon><div class="track"><i></i></div><ui-icon name="triRight" w="11" h="14"></ui-icon></div>
  <footer><a href="#">Open execution history for current test point</a></footer>`);

define('page-scrollbar', `
  :host { display: flex; flex-direction: column; align-items: center; width: 24px; flex: none; background: #f6f6f6; padding: 5px 0 5px 2px; gap: 9px; margin-left: auto; }
  i { flex: 1; width: 13px; border-radius: 7px; background: #7f7f7f; margin-bottom: 5px; }
`, `<ui-icon name="triUp" w="14" h="12"></ui-icon><i></i><ui-icon name="triDown" w="14" h="12"></ui-icon>`);

/* ---------- taskbar ---------- */
define('task-app', `
  :host { display: block; flex: none; }
  button { position: relative; width: 60px; height: 60px; border-radius: 7px; }
  :host([mark]) button::after { content: ""; position: absolute; bottom: 1px; left: 50%; translate: -50% 0; width: 10px; height: 5px; border-radius: 3px; background: #78868c; }
  :host([mark="on"]) button { background: linear-gradient(rgba(255,255,255,.65), rgba(255,255,255,.65)) center / 56px 56px no-repeat; }
  :host([mark="on"]) button::after { width: 24px; background: #0f70cc; }
  :host([mark="alert"]) button { background: #e9adab; }
  :host([mark="alert"]) button::after { background: #c42b1c; }
  ::slotted(*) { position: absolute; z-index: 1; top: 5px; left: 44px; translate: -50% 0; min-width: 24px; height: 24px; padding: 0 5px; border-radius: 12px; background: #0078d4; color: #fff; font-size: 18px; line-height: 24px; text-align: center; box-sizing: border-box; }
`, el => `<button class="center" aria-label="${el.getAttribute('icon')}"><ui-icon name="${el.getAttribute('icon')}" w="36"></ui-icon><slot></slot></button>`);

define('task-bar', `
  :host { display: flex; align-items: center; height: 72px; border-top: 2px solid #a9b7bc; padding-bottom: 2px; color: #1a1a1a; font-size: 18px; line-height: 24px;
    background: linear-gradient(90deg, #d4e3ef 0, #d9e6f1 24%, #d3eef2 29%, #ebe7da 34%, #f1e3d6 37%, #f0e3d8 46%, #d4edf3 50%, #cfe6ef 54%, #d3f0f4 60%, #cdf5f7 66%, #d3f0f4 73%, #cdf7f5 81%, #eee6d9 84%, #f4e2d3 87%, #dbe5ea 91%, #d5e1ee 100%); }
  .news { position: relative; width: 96px; height: 60px; padding: 15px 0 0 42px; }
  .news b { position: absolute; left: 46px; top: 4px; width: 24px; height: 24px; border-radius: 50%; background: #c42b1c; color: #fff; font-weight: 400; font-size: 16px; line-height: 24px; text-align: center; }
  .apps { display: flex; gap: 6px; margin-left: 284px; }
  .tray { display: flex; align-items: center; margin-left: auto; padding-right: 30px; }
  .lang { text-align: center; margin: 0 26px; line-height: 23px; }
  .clock { text-align: right; margin-left: 23px; }
  .t1 { margin-right: 27px; } .t2 { margin-right: 23px; } .t3 { margin-right: 12px; }
`, `
  <button class="news" aria-label="Widgets"><ui-icon name="nba" w="12" h="30"></ui-icon><b>9+</b></button>
  <div class="apps">
    ${['windows', 'search', 'taskview', 'copilot', 'mcafee', 'edge', 'store', 'explorer', 'outlook'].map(n => `<task-app icon="${n}"></task-app>`).join('')}
    <task-app icon="lapp"><span>6</span></task-app>
    <task-app icon="spotify" mark="run"></task-app>
    <task-app icon="chrome" mark="on"></task-app>
    <task-app icon="whatsapp" mark="run"><span>25</span></task-app>
    <task-app icon="word" mark="run"></task-app>
    <task-app icon="snip" mark="alert"></task-app>
  </div>
  <div class="tray">
    <button class="t1" aria-label="Hidden icons"><ui-icon name="up" w="18"></ui-icon></button>
    <button class="t2" aria-label="Updates"><ui-icon name="sync" w="24"></ui-icon></button>
    <button aria-label="OneDrive"><ui-icon name="cloud" w="24" h="16"></ui-icon></button>
    <button class="lang">ENG<br>IN</button>
    <button class="t3" aria-label="Network"><ui-icon name="wifi" w="24" h="18"></ui-icon></button>
    <button class="t3" aria-label="Volume"><ui-icon name="volume" w="24" h="20"></ui-icon></button>
    <button aria-label="Battery"><ui-icon name="battery" w="24" h="16"></ui-icon></button>
    <button class="clock">23:18<br>14-05-2025</button>
  </div>`);

define('desktop-shell', `
  :host { display: grid; grid-template-rows: auto minmax(0, 1fr) auto; height: 100vh; }
  .page { position: relative; overflow: hidden; display: flex; flex-direction: column; background: #fff; min-height: 0; }
  .work { flex: 1; display: flex; min-height: 0; }
`, `
  <browser-chrome></browser-chrome>
  <div class="page">
    <az-header></az-header>
    <div class="work"><az-rail></az-rail><suites-panel></suites-panel><points-pane></points-pane><page-scrollbar></page-scrollbar></div>
    <results-dialog></results-dialog>
  </div>
  <task-bar></task-bar>`);
</script>
</body>
</html>
